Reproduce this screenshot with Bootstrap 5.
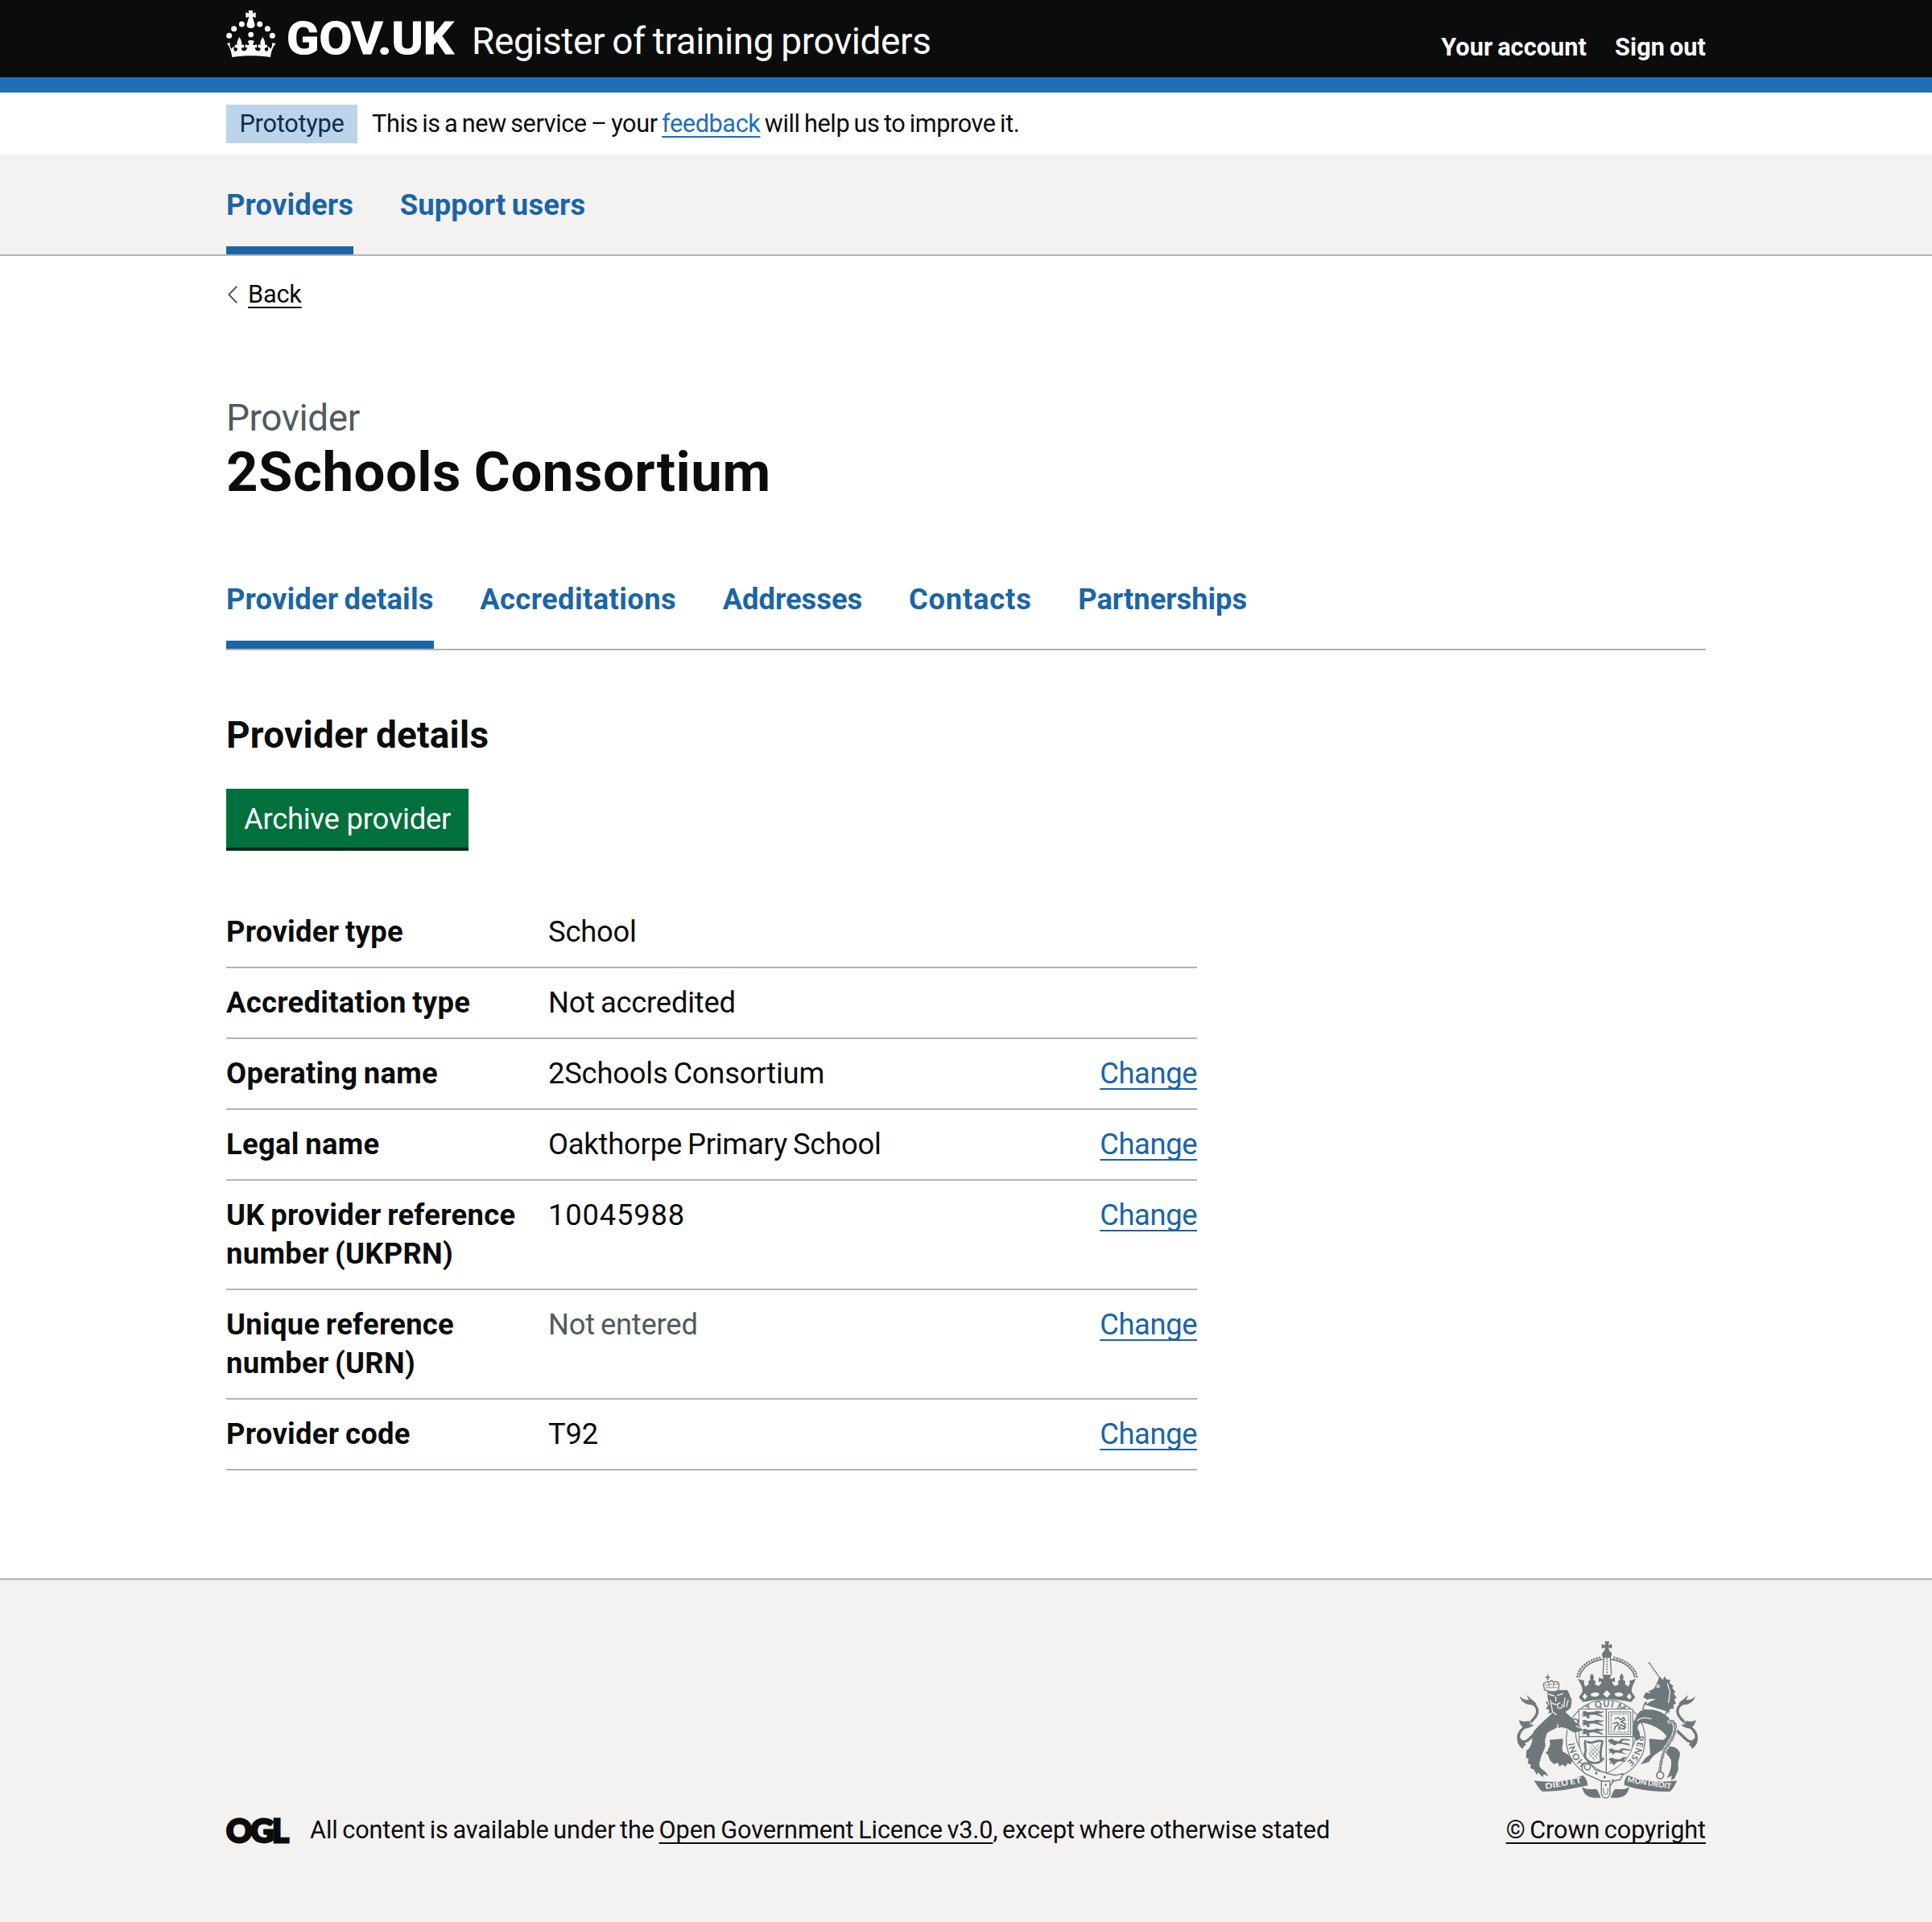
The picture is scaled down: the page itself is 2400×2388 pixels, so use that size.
<!DOCTYPE html>
<html lang="en">
<head>
<meta charset="utf-8">
<meta name="viewport" content="width=device-width, initial-scale=1">
<title>2Schools Consortium - Register of training providers</title>
<link href="https://cdn.jsdelivr.net/npm/bootstrap@5.3.0/dist/css/bootstrap.min.css" rel="stylesheet">
<style>
html{font-size:30.633px}
body{font-family:Roboto,"Liberation Sans",sans-serif;color:#0b0c0c;background:#fff;line-height:1.25;font-size:1rem;word-spacing:-.06em}
.page-width{width:60rem;max-width:60rem;padding:0}
a{color:#1a65a6;text-decoration-thickness:2px;text-underline-offset:.158em;text-decoration-skip-ink:none}
.ink{color:#0b0c0c}
.top-bar{background:#0b0c0c;height:115px;border-bottom:19px solid #1d70b8;color:#fff}
.brand-logo{width:305px;height:96px;flex:none}
.service-name{font-size:1.5rem;padding-top:23px;letter-spacing:-.0087em;color:#fff}
.account-links{padding-top:39.6px;gap:35px}
.account-links a{color:#fff;letter-spacing:.003em}
.phase-banner{height:77px;padding-top:14.6px}
.phase-tag{background:#bbd4ea;color:#0c2d4a;padding:5px 16px;width:163px;letter-spacing:-.0072em}
.phase-text{padding:5px 0 0 18px;letter-spacing:-.0125em}
.phase-text a{color:#1d70b8}
.main-nav{background:#f3f2f1;border-bottom:2px solid #b1b4b6}
.tab-list{gap:57.6px;font-size:1.1875rem}
.tab-list a{color:#1a65a6;padding:39.6px 0 29px;border-bottom:10px solid transparent;line-height:45.5px;white-space:nowrap;letter-spacing:.0045em}
.tab-list a.active{border-color:#1a65a6}
.sub-tabs{border-bottom:2px solid #b1b4b6;margin-top:56.5px}
.back{margin-top:29px;gap:13.5px;padding-left:1.5px}
.back a{letter-spacing:-.005em}
.caption-l{font-size:1.5rem;color:#505a5f;margin-top:105.4px;letter-spacing:-.009em}
.title-xl{font-size:2.25rem;line-height:76.6px;letter-spacing:.0075em;margin:.8px 0 0}
.title-m{font-size:1.5rem;line-height:1.25;margin:76.6px 0 38px;letter-spacing:.005em}
.btn-archive{--bs-btn-color:#fff;--bs-btn-bg:#00703c;--bs-btn-hover-bg:#005a30;--bs-btn-hover-color:#fff;--bs-btn-border-width:0;--bs-btn-border-radius:0;--bs-btn-font-size:1.1875rem;width:301px;height:73px;padding:4px 0 0;box-shadow:0 4px 0 #002d18;letter-spacing:-.006em}
.summary{width:1206px;margin:61.4px 0 134px;font-size:1.1875rem;line-height:47.9px}
.summary-row{padding:19.4px 0 18.8px;border-bottom:2px solid #b1b4b6}
.summary-row dt{width:400px;padding-right:20px;letter-spacing:.0085em;flex:none}
.summary-row dd{margin:0;letter-spacing:-.006em}
.summary-row dd a{color:#1a65a6;letter-spacing:-.0115em}
.digits{letter-spacing:.022em!important}
.unset{color:#505a5f}
.page-foot{background:#f3f2f1;border-top:2px solid #b1b4b6;padding-top:74px;height:428px}
.ogl{width:80px;height:54px;margin:-8px 24px -8px 0;overflow:visible}
.licence{letter-spacing:-.0034em}
.crest{width:230px;height:202px;margin-bottom:16px}
.copy{letter-spacing:-.003em}
</style>
</head>
<body>
<header class="top-bar">
  <div class="container page-width d-flex align-items-start">
    <svg class="brand-logo" viewBox="0 0 305 96" role="img" aria-label="GOV.UK">
      <g transform="translate(-11) scale(.33333)" fill="#fff">
        <path d="M116 39h17l-2 11 12-4v20l-12-4 8 27c2 10-4 16-14 16s-17-6-15-16l8-27-12 4V46l12 4z"/>
        <circle cx="91" cy="90" r="10.5"/><circle cx="158" cy="90" r="10.5"/><circle cx="62" cy="107" r="10.5"/><circle cx="187" cy="107" r="10.5"/><circle cx="44" cy="133" r="10.5"/><circle cx="205" cy="133" r="10.5"/><circle cx="125" cy="129" r="10"/>
        <path d="M33 162l15-2c-3 8-1 16 5 22 3-5 6-8 12-8-6 6-5 14 1 17 8 1 11-8 7-13-6 1-10-3-8-9 3-3 7-3 9 0-3-11 2-20 8-31 7 11 11 20 8 31 3-3 8-3 10 1 1 6-4 9-9 8-3 7 2 13 9 12 8-1 11-7 10-13-2-2-5-1-6 2v-14c6 3 9 4 14 3 0-6-2-10-5-15 8-4 17-4 25 0-4 5-5 9-5 15 5 1 8 0 14-3v14c-2-3-4-4-6-2-1 6 2 12 10 13 7 1 11-5 9-12-5 1-10-2-9-8 2-4 7-4 10-1-3-11 1-20 8-31 6 11 11 20 8 31 2-3 6-3 9 0 2 6-2 10-8 9-4 5-1 14 7 13 6-3 7-11 1-17 6 0 9 3 12 8 6-6 8-14 5-22l15 2c-13 15-17 31-20 51-45-7-99-7-143 0-3-20-7-36-19-51z"/>
      </g>
      <text x="75" y="66.8" font-size="55.5" font-weight="700" fill="#fff" stroke="#fff" stroke-width="1.2" textLength="207.5" lengthAdjust="spacingAndGlyphs">GOV.UK</text>
    </svg>
    <a class="service-name text-decoration-none" href="#">Register of training providers</a>
    <nav class="account-links d-flex ms-auto fw-bold"><a class="text-decoration-none" href="#">Your account</a><a class="text-decoration-none" href="#">Sign out</a></nav>
  </div>
</header>
<div class="container page-width phase-banner d-flex align-items-start">
  <strong class="phase-tag fw-normal text-center">Prototype</strong>
  <span class="phase-text">This is a new service – your <a href="#">feedback</a> will help us to improve it.</span>
</div>
<div class="main-nav">
  <nav class="container page-width d-flex tab-list fw-bold"><a class="text-decoration-none active" href="#">Providers</a><a class="text-decoration-none" href="#">Support users</a></nav>
</div>
<div class="container page-width">
  <div class="back d-flex align-items-center">
    <svg width="12" height="22" viewBox="0 0 12 22" fill="none" stroke="#505a5f" stroke-width="2"><path d="M11.3 .8 1.3 11l10 10.2"/></svg>
    <a class="ink" href="#">Back</a>
  </div>
  <main>
    <div class="caption-l">Provider</div>
    <h1 class="title-xl fw-bold">2Schools Consortium</h1>
    <nav class="sub-tabs d-flex tab-list fw-bold"><a class="text-decoration-none active" href="#">Provider details</a><a class="text-decoration-none" href="#" style="letter-spacing:.011em">Accreditations</a><a class="text-decoration-none" href="#" style="letter-spacing:0">Addresses</a><a class="text-decoration-none" href="#" style="letter-spacing:.022em">Contacts</a><a class="text-decoration-none" href="#" style="letter-spacing:-.001em">Partnerships</a></nav>
    <h2 class="title-m fw-bold">Provider details</h2>
    <button type="button" class="btn btn-archive d-block">Archive provider</button>
    <dl class="summary">
      <div class="summary-row d-flex"><dt>Provider type</dt><dd>School</dd></div>
      <div class="summary-row d-flex"><dt>Accreditation type</dt><dd>Not accredited</dd></div>
      <div class="summary-row d-flex"><dt>Operating name</dt><dd>2Schools Consortium</dd><dd class="ms-auto"><a href="#">Change</a></dd></div>
      <div class="summary-row d-flex"><dt>Legal name</dt><dd>Oakthorpe Primary School</dd><dd class="ms-auto"><a href="#">Change</a></dd></div>
      <div class="summary-row d-flex"><dt>UK provider reference number (UKPRN)</dt><dd class="digits">10045988</dd><dd class="ms-auto"><a href="#">Change</a></dd></div>
      <div class="summary-row d-flex"><dt>Unique reference number (URN)</dt><dd class="unset">Not entered</dd><dd class="ms-auto"><a href="#">Change</a></dd></div>
      <div class="summary-row d-flex"><dt>Provider code</dt><dd>T92</dd><dd class="ms-auto"><a href="#">Change</a></dd></div>
    </dl>
  </main>
</div>
<footer class="page-foot">
  <div class="container page-width d-flex justify-content-between align-items-end">
    <div class="d-flex align-items-center">
      <svg class="ogl" viewBox="0 -12 80 54" role="img" aria-label="Open Government Licence"><text x="0" y="29.5" font-family="Lato" font-weight="900" font-size="40" fill="#0b0c0c" stroke="#0b0c0c" stroke-width="2.8" textLength="78" lengthAdjust="spacing">OGL</text></svg>
      <span class="licence">All content is available under the <a class="ink" href="#">Open Government Licence v3.0</a>, except where otherwise stated</span>
    </div>
    <div class="d-flex flex-column align-items-center">
      <svg class="crest" viewBox="58 50 690 606" fill="#6e777a" stroke-linecap="round" stroke-linejoin="round">
        <defs><path id="garter" d="M402 537a118 118 0 0 1 0-236a118 118 0 0 1 0 236"/></defs>
        <!-- royal crown -->
        <path d="M399 57h16l-3 14 13-4v17l-13-4 4 13c10 4 12 18 4 25h-28c-7-8-4-21 5-25l3-13-13 4V67l13 4z"/>
        <g fill="none" stroke="#6e777a">
          <path d="M304 190c6-30 36-58 86-66M510 190c-6-30-36-58-86-66" stroke-width="5"/>
          <path d="M296 188c6-34 40-62 90-72M518 188c-6-34-40-62-90-72" stroke-width="8" stroke-dasharray="0 10.5"/>
          <path d="M396 118l-4 60M419 118l4 60" stroke-width="4"/><path d="M407 122v56" stroke-width="6" stroke-dasharray="0 10"/>
        </g>
        <path d="M298 197l25 7c-3 8-2 18 6 22 2-6 6-9 11-9-5-7-2-16 6-16-5-9-1-17 4-24 7 7 11 15 5 24 9 0 12 9 6 16 7 0 9 9 17 4 7-4 9-11 6-15-3 0-5 2-8 4v-18c7 3 12 5 18 4-1-7-2-10-6-15h36c-4 5-5 9-6 15 7 1 12-1 18-4v18c-3-2-5-4-8-4-3 4-1 11 6 15 8 5 10-4 17-4-6-7-3-16 6-16-6-9-2-17 5-24 6 7 9 15 4 24 9 0 12 9 7 16 5 0 9 3 11 9 8-4 9-14 6-22l24-7c-8 18-17 34-15 49l13 19-16 18c-60-14-118-14-178 0l-16-18 13-19c3-15-7-31-17-49z"/>
        <g fill="#f3f2f1"><path d="M406 239l14 14-14 14-14-14z"/><ellipse cx="362" cy="255" rx="16" ry="8" transform="rotate(-5 362 255)"/><ellipse cx="451" cy="255" rx="16" ry="8" transform="rotate(5 451 255)"/><path d="M324 251l10 11-10 12-9-12zM490 251l9 12-9 11-10-11z"/></g>
        <!-- garter -->
        <g fill="none" stroke="#6e777a" stroke-width="3.5"><circle cx="402" cy="422" r="147"/><path d="M305 342a112 112 0 1 0 195 1"/></g>
        <g font-family="Lato" font-weight="700" font-size="33"><text letter-spacing="1"><textPath href="#garter" startOffset="80">HONI</textPath></text><text><textPath href="#garter" startOffset="213">SO</textPath></text><text letter-spacing="3"><textPath href="#garter" startOffset="300">T QUI M</textPath></text><text letter-spacing="2"><textPath href="#garter" startOffset="545">PENSE</textPath></text></g>
        <!-- shield -->
        <path d="M303 309h200v124c0 50-44 91-100 117-56-26-100-67-100-117z" fill="#f3f2f1" stroke="#6e777a" stroke-width="3"/>
        <path d="M404 310v238M304 412h198" fill="none" stroke="#6e777a" stroke-width="4"/>
        <path id="leo" d="M314 319l12-3 8 5 20-1 16-4 18 3 8-3-6 8-18 2 14 5 8 9-10-3-14-4-13-3-18 2 5 9-10 4-5-10-15 5 8-9-11 3 8-9z"/><use href="#leo" y="33"/><use href="#leo" y="66"/>
        <path d="M412 424l14-4 6 6 18 4 12-10 26 2 7 5-28-1-7 8 26 3 8 9-27-6-20-2-13 8-10-8-10 5 6-8-8-4zM412 460l12-5 8 6 18 2 14-8 25 4 6 6-28-3-4 8 22 8-30-5-16-2-9 8-8-8-9 4 5-8zM414 494l12-4 8 5 20 2 14-9 14 1-12 9 8 8-26-2-12 6-8 10-6-10-10 4 5-11-6-3z"/>
        <g fill="none" stroke="#6e777a"><path d="M414 320h81v83h-81z" stroke-width="3"/><path d="M422 328h65v67h-65z" stroke-width="2.5" stroke-dasharray="9 5"/><path d="M437 345l12-4 8 8 12-8 4 8-14 8 16 8-4 10-12-7-8 9 2 10M431 363l12-4 8 6-14 10-3 12M458 380l12 4 6-8" stroke-width="5"/>
        <path d="M326 428c-6 18 6 26 0 42s4 30 16 36c16 8 40 6 50-12M334 432c22 10 36-12 56-2-4 18-10 36-6 70" stroke-width="8"/><path d="M344 448l34 38M342 460l30 36M350 440l30 32M340 474l22 26M376 440l-36 38M382 448l-38 40M384 462l-30 34" stroke-width="2"/></g>
        <!-- motto scroll -->
        <path d="M135 576c60 8 125 6 182-20 12 10 17 23 18 38-50 11-110 24-170 22-12-9-20-24-30-40zM668 576c-60 8-125 6-184-20-10 10-13 22-13 36 46 18 114 27 170 25 12-9 19-25 27-41zM314 599c18 14 34 8 52 8 10 8 12 22 18 33-20 2-40-1-53-9-10-7-14-18-17-32zM490 599c-18 14-34 8-52 8-10 8-12 22-18 33 20 2 40-1 53-9 10-7 14-18 17-32z"/>
        <g fill="#f3f2f1" font-family="Lato" font-weight="900" font-size="29"><text transform="translate(178 608) rotate(-10)" textLength="137" lengthAdjust="spacingAndGlyphs">DIEU ET</text><text transform="translate(482 582) rotate(9)" textLength="164" lengthAdjust="spacingAndGlyphs">MON DROIT</text></g>
        <!-- strap and buckle -->
        <path d="M316 520c8-14 24-14 34 0l14 16c28 6 50 18 75 20l28-6-10 22-26 6-12 16-28-14-66-30c-10-6-14-20-9-30z" fill="#f3f2f1" stroke="#6e777a" stroke-width="4"/><circle cx="334" cy="525" r="11" fill="none" stroke="#6e777a" stroke-width="4"/><circle cx="367" cy="548" r="5"/><circle cx="398" cy="563" r="5"/><circle cx="428" cy="575" r="4"/>
        <path d="M386 578h32v44a16 19 0 0 1-32 0z" fill="#f3f2f1" stroke="#6e777a" stroke-width="4"/><path d="M394 604v14a8 10 0 0 0 16 0v-14" fill="none" stroke="#6e777a" stroke-width="3"/><circle cx="402" cy="592" r="4"/>
        <!-- tails -->
        <g id="tail">
          <path d="M112 286C152 290 158 322 130 350C106 374 76 388 77 416C80 438 104 434 118 420L156 384" fill="none" stroke="#6e777a" stroke-width="10"/>
          <path d="M81 260c8 12 22 16 36 15-6-6-8-10-7-18 8 14 26 20 34 34-14-2-22 0-32 1-14-4-27-14-31-32zM79 350c14 8 26 6 42 2l-10 14 24 2c-14 12-24 12-34 14-12-6-20-18-22-32zM74 406c-6 22 2 40 20 52 0-8 4-12 12-16z"/>
          <path d="M121 352l-2 8" stroke="#f3f2f1" stroke-width="3"/>
        </g>
        <use href="#tail" transform="matrix(-1 0 0 1 817 0)"/>
        <!-- lion -->
        <path d="M186 240l72-2c10 12 8 22 18 36-4 6 2 12-4 20 4 8-4 14-8 18l-12 8c12 14 30 24 38 40 10 4 22 18 25 30-14 2-26 10-38 4-16-8-36-14-56-16-12 8-32 14-36 22l-8 34c4 22-14 40-18 62-4 14-8 24 2 34 8 8 22 14 26 30l-16-8-4 12-16-18-6 8-12-20-12-4 2-14-12-4 4-16-10-6 2-28c10 0 16-18 20-30 4-16-2-30 10-44 22-24 42-42 68-66l-16 4 2-14-12-4 8-12-8-10 8-12-2-12z"/>
        <path d="M192 424l50-4c4 20-8 36 2 50 14 4 28 16 34 30l-6 16-12-4-8 12-12-8-10 8-6-14-16 4-14-14-8-22-8-4c4-14 24-24 14-50z"/>
        <path d="M174 238l-4-22c6-10 16-8 24-8l6-6 8 6c8-2 18 0 20 8l-2 24c-16 6-36 6-52-2z" fill="#f3f2f1" stroke="#6e777a" stroke-width="4"/>
        <path d="M186 183v18M179 191h14" stroke="#6e777a" stroke-width="5"/><path d="M180 230l40-1M177 219l46-3M190 212v14M208 210v16" stroke="#6e777a" stroke-width="3" stroke-dasharray="5 5"/>
        <path d="M190 254l20 6m12-2 20-6M216 264v16m-14 6c8 8 18 8 30 0M222 292c0 20 18 20 18 0M196 276l8 44 14 10M250 268l-4 34M262 276l-6 24M184 270l6 22M222 366l4 24 10-12 22 6 22 14M185 400l-8 26 8 40M292 372l16 8" fill="none" stroke="#f3f2f1" stroke-width="4"/>
        <!-- unicorn -->
        <path d="M563 136l39 55" fill="none" stroke="#6e777a" stroke-width="6" stroke-dasharray="6 3" stroke-linecap="butt"/>
        <path d="M596 205l6-18 14 14 4-14 12 14 10-2-2 14 14 10-4 8 12 14-6 6 10 16-8 6 6 16-10 4 2 14-14 2-6 16c-24-16-54-16-80-30 4-12 20-18 34-22-14-2-22-4-32 2l-16-10 8-16 32-16z"/>
        <path d="M546 290l84 26-6 16-84-22z" fill="#f3f2f1" stroke="#6e777a" stroke-width="4"/><path d="M552 286l74 23" stroke="#6e777a" stroke-width="9" stroke-dasharray="0 14"/>
        <path d="M528 318c34-14 74-6 100 16 20 16 28 36 26 62 6 20-4 40-18 54 18-4 32 4 42 20 4 16-8 28-6 52 4 18-8 28-12 44l-14 10 2-18-18 8c12-20 18-40 16-62-4-18-20-30-34-42-22 14-40 26-48 44l-32 10c14-16 18-28 36-36l-4-60 52 4c10-8 14-10 10-18-22-24-46-36-78-44-20-6-28 6-27 22 7 8 10 20 8 36l-12 8-14-20c0-26 0-62 27-90z"/>
        <g fill="none" stroke="#f3f2f1" stroke-width="4"><circle cx="597" cy="224" r="5"/><path d="M632 214l10 32-6 38M548 244l18 4M520 352c16-14 32-12 50-6"/></g>
        <path id="chain" d="M640 356c24-6 24 16 18 42s-32 52-40 74c-8 24-12 44-14 68" fill="none" stroke="#f3f2f1" stroke-width="16"/><path d="M640 356c24-6 24 16 18 42s-32 52-40 74c-8 24-12 44-14 68" fill="none" stroke="#6e777a" stroke-width="11" stroke-dasharray="13 12"/><path d="M640 356c24-6 24 16 18 42s-32 52-40 74c-8 24-12 44-14 68" fill="none" stroke="#f3f2f1" stroke-width="5" stroke-dasharray="13 12"/><path d="M640 356c24-6 24 16 18 42s-32 52-40 74c-8 24-12 44-14 68" fill="none" stroke="#6e777a" stroke-width="3"/><circle cx="605" cy="556" r="13" fill="#f3f2f1" stroke="#6e777a" stroke-width="5"/>
      </svg>
      <a class="ink copy" href="#">© Crown copyright</a>
    </div>
  </div>
</footer>
<script src="https://cdn.jsdelivr.net/npm/bootstrap@5.3.0/dist/js/bootstrap.bundle.min.js"></script>
</body>
</html>
